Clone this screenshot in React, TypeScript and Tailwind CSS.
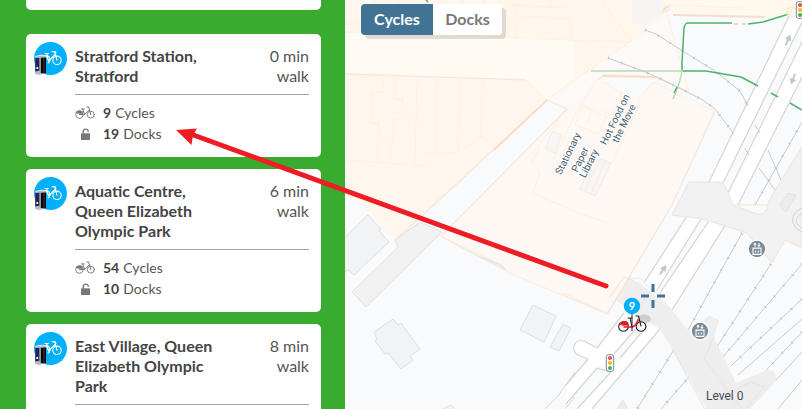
import React from "react";

type Station = { name: string; walk: string; availability?: { cycles: number; docks: number } };

const stations: Station[] = [
  { name: "Stratford Station, Stratford", walk: "0 min walk", availability: { cycles: 9, docks: 19 } },
  { name: "Aquatic Centre, Queen Elizabeth Olympic Park", walk: "6 min walk", availability: { cycles: 54, docks: 10 } },
  { name: "East Village, Queen Elizabeth Olympic Park", walk: "8 min walk" },
];

function DockBadge() {
  return (
    <svg className="size-[33px] shrink-0" viewBox="0 0 33 33" aria-hidden="true">
      <circle cx="16.5" cy="16.5" r="16.5" fill="#00b0fb" />
      <g fill="none" stroke="#fff" strokeWidth="1.1" strokeLinecap="round" strokeLinejoin="round">
        <circle cx="23" cy="18.3" r="4.2" />
        <path d="M12.5 13.6a4 4 0 0 1 1.5 7.4" />
        <path d="M2 14.5C6 13 10 13 12.5 14L14.5 19l6.5-6.500M12.5 11.500l2 7.500M11 11.500h3.5M19 9.6l1.800.2L23 18.300" />
        <path d="M18 9.600h3l1 1.600" />
      </g>
      <path d="M1.200 15.400 3.500 14l7.500-.6 1 1V31.500L5 33 1 32z" fill="#b9bcc4" />
      <path d="M1.200 16l4.300-.3v13l-4.300.8z" fill="#20265c" />
      <path d="M6.800 15.700l5.200-.3V31.500l-5.200-.5z" fill="#080808" />
      <path d="M10 16v15" stroke="#3b3b3b" />
      <path d="M6.100 15.700v15" stroke="#9296a2" />
      <rect x="2.400" y="25" width="1.800" height="2" fill="#fff" />
    </svg>
  );
}

function BikeIcon() {
  return (
    <svg className="h-[13px] w-5" viewBox="0 0 20 13" fill="none" stroke="#777" strokeLinecap="round" strokeLinejoin="round" aria-hidden="true">
      <circle cx="4.4" cy="8.6" r="3.7" strokeWidth=".9" />
      <circle cx="15.8" cy="8.6" r="3.500" strokeWidth=".9" />
      <path d="M1 6.400C2.300 4.500 5.200 4 7.500 5.600L7 8 4 7.600z" fill="#777" strokeWidth=".5" />
      <path d="M4.400 8.600h5.200L14 4.200M7.800 3.200l1.800 5.400M6.500 2.900h2.700M12 1h1.700l2.100 7.600" strokeWidth="1" />
    </svg>
  );
}

function UnlockIcon() {
  return (
    <svg className="h-3 w-5" viewBox="0 0 20 12" aria-hidden="true">
      <rect x="6" y="5.300" width="9" height="6.700" fill="#777" />
      <path d="M8.200 5.500V3.600a2.600 2.600 0 0 1 5.100-.6v.7" fill="none" stroke="#777" strokeWidth="1.400" />
    </svg>
  );
}

function StationCard({ station }: { station: Station }) {
  return (
    <li className="flex shrink-0 gap-2 rounded-[5px] bg-white pt-2 pr-3 pb-[13px] pl-2">
      <DockBadge />
      <div className="min-w-0 flex-1 pt-1">
        <div className="flex justify-between border-b border-[#a3a3a3] pb-2 text-base leading-5">
          <h2 className="w-2/3 font-bold">{station.name}</h2>
          <p className="w-12 text-right text-[#555]">{station.walk}</p>
        </div>
        {station.availability && (
          <dl className="pt-[7px] text-sm leading-[21px]">
            <div className="flex items-center gap-2">
              <BikeIcon />
              <dt className="order-2 -ml-1 text-[#555]">Cycles</dt>
              <dd className="font-bold">{station.availability.cycles}</dd>
            </div>
            <div className="flex items-center gap-2">
              <UnlockIcon />
              <dt className="order-2 -ml-1 text-[#555]">Docks</dt>
              <dd className="font-bold">{station.availability.docks}</dd>
            </div>
          </dl>
        )}
      </div>
    </li>
  );
}

function Lift({ x, y }: { x: number; y: number }) {
  return (
    <g transform={`translate(${x} ${y})`}>
      <circle r="8.800" fill="#7b8d9b" stroke="#fff" strokeWidth="1.300" />
      <path d="M-4-.9h8v6.300h-8zM-1.400 1.400v2.200M1.400 1.400v2.200M-2-2.400v-3.600M2-6v3.600" fill="none" stroke="#fff" strokeWidth="1.100" />
      <path d="M-3.700-4.300L-2-6.500-.3-4.300zM.3-4L2-1.900 3.700-4z" fill="#fff" />
    </g>
  );
}

function TrafficLight({ x, y }: { x: number; y: number }) {
  return (
    <g transform={`translate(${x} ${y})`}>
      <rect x="-3.700" y="-8.400" width="7.400" height="16.800" rx="2.400" fill="#fff" stroke="#7c8b97" />
      <circle cy="-5" r="2.100" fill="#e8534a" />
      <circle r="2.100" fill="#fbbc04" />
      <circle cy="5" r="2.100" fill="#4caf6a" />
    </g>
  );
}

function RoadArrow({ x, y, angle }: { x: number; y: number; angle: number }) {
  return (
    <path
      transform={`translate(${x} ${y}) rotate(${angle})`}
      d="M0-6L3.500 0H1V5.500H-1V0H-3.500z"
      fill="#c3c7cd"
    />
  );
}

function StreetMap() {
  return (
    <svg className="absolute inset-0 h-full w-full" viewBox="345 0 457 409" preserveAspectRatio="xMidYMid slice" role="img" aria-label="Map around Stratford Station">
      <rect x="0" y="0" width="1200" height="900" fill="#f8fafc" />

      {/* shopping centre */}
      <path d="M345 0H662L688 92 655 77 604 75 597 82 567 109 547 100 415 223 395 240 362 205 345 196z" fill="#fff7ee" />
      <path d="M345 33L507 38 573 40V80L547 100 525 80 345 74z" fill="#fffaf4" />
      <path d="M573 83L630 42 669 7 664 0 688 92 655 77 604 75 567 109 547 100z" fill="#fdf9f6" />
      <path d="M632 0H660L665 10 645 27 632 23z" fill="#f8f4f3" />
      <path d="M662 0H802V14L765 17 673 15z" fill="#fff8ec" />
      <path d="M567 109L597 82 609 81 610 88 638 100 653 82 715 111 672 205 607 314 563 295 507 271 440 236 472 205z" fill="#fef8f4" />
      <path d="M552 131l10 4-7 18-10-4z" fill="#f8f4f3" stroke="#f2eeeb" />
      <path d="M594 157l17 6-16 33-15-7z" fill="#faf5f3" stroke="#f1ebe9" />
      <path d="M599 160l-14 31M605 162l-14 32" stroke="#f2ecea" fill="none" />
      <g fill="none" stroke="#fdf1dd" strokeWidth="1">
        <path d="M345 32L420 34M345 24h20v8M353 24v8M375 0v32M398 0v5M442 0v5M463 0v5M484 0l2 6M506 0l2 37M516 0v37M516 6l34 1V0M516 16l55 3v20M506 37l66 3M507 4l43 3M550 7l22 1" />
        <path d="M348 78l-1 83M383 78l-1 14-10 1-1 30 8 1-1 38M395 78v21l8 1-1 18-9 1-2 43M417 78l-2 87M437 79l-1 72M460 80l-2 72M483 81l-2 55M345 161l35 1 46 4 1-14 31 1 23-17 14 12" />
        <path d="M526 80l21 20M547 100l26-19 58-40-30-41M573 40l58 2L670 7M663 0l26 92M670 5l72 3" />
        <path d="M567 109l-37 48 10 16-7 20 45 20 30 10M575 115l-22 46M540 148l-10 16M596 80l-21 35" />
        <path d="M582 105l24 11-7 18-24-9 7-19 10 4-5 14M602 81l20 12-9 20M638 100l15-18 62 29M630 99l-18 16-10-4M612 163l26-57M569 140l-12 26" />
      </g>
      <g fill="none" stroke="#f9e6d7" strokeWidth="1.300">
        <path d="M345 74l181 6M547 100L435 204l-40 36M567 109L472 205l-31 31M547 100l20 9M597 80l7-5 51 2 34 15" />
        <path d="M715 111L672 205 607 314 563 295M440 236l67 35M663 10l7-5-1 5-6 2z" />
      </g>
      <path d="M547 100l-53 50M603 76l53 1M673 15l92 2M668 6l-5 4" fill="none" stroke="#f6ddca" strokeWidth="1.800" />
      <path d="M440 236l62 29 5 7 55 23 2-2 43 20" fill="none" stroke="#fcecd9" />
      <path d="M480 257l21 8 4 5" fill="none" stroke="#e7e7e7" strokeWidth="2" />

      {/* small buildings */}
      <g fill="#f2f3f4" stroke="#dcdee1" strokeLinejoin="round">
        <path d="M340 242L368 215l13 14-2 2 10 11-35 33-5-5-4 2z" />
        <path d="M374 332l19-13 5 6 3-2 19 26-10 7 3 4-12 9-13-16-3 1-10-13 2-2z" />
        <path d="M533 305l23 11-12 26-24-12zM563 324l8 4-12 23-9-4zM443 409l8-4 4 4" />
      </g>
      <path d="M420 222l22 10-76 75-14-15 46-45-3-7z" fill="#f1f1f1" stroke="#e2e2e2" />

      {/* carriageways */}
      <path d="M792 10L709 182 644 283 657 290 722 185 802 22V0z" fill="#fff" />
      <path d="M802 42L728 193 660 293 672 310 738 205 802 77z" fill="#fff" />
      <path d="M624 313L597 348 584 341C574 338 570 351 578 355L588 359 566 385V404L597 368 617 352 640 324z" fill="#fff" />
      <path d="M647 326L622 358 611 372 577 409H592L660 329z" fill="#fff" />
      <g fill="none" stroke="#d5d7db" strokeWidth="1.300" strokeLinejoin="round">
        <path d="M792 10L709 182 644 283M802 22L722 185 657 290M802 42L728 193 660 293M802 77L738 205 672 310" />
        <path d="M624 313L597 348 584 341C574 338 570 351 578 355L588 359 566 385M640 324L614 354M620 358L647 326M611 372L597 368 566 404M611 372L577 409M660 329L592 409" />
      </g>
      <path d="M545 409l13-13 17-24M565 409l10-12" fill="none" stroke="#d5d7db" />

      {/* railway tracks */}
      <g fill="none" stroke="#c8cacd" strokeWidth="1">
        <path d="M742 233L688 330M771 264L705 365M802 264L705 378M802 299L731 366M802 319L738 375M802 332L755 382M802 352L764 393M802 380L778 409M675 348L637 409M695 370L661 409M755 205L802 122M776 205L802 165M768 150L781 180M759 168L775 190M745 148l4 7M755 125l5 8" />
        <path d="M645 30l11 4 22 14 37 23 25 20 8 15M608 58l40 15 15 7 40 20 12 9 19 25" />
      </g>
      <g fill="none" stroke="#bfc2c6" strokeWidth="3" strokeDasharray="1 13">
        <path d="M742 233L688 330M771 264L705 365M802 264L705 378M802 299L731 366M802 332L755 382M675 348L637 409M695 370L661 409M755 205L802 122M645 30l11 4 22 14 37 23 25 20 8 15M608 58l40 15 15 7 40 20 12 9 19 25" />
      </g>

      {/* raised walkways */}
      <path d="M689 182H720Q724 183 726 188L733 205 757 214 767 205 778 185 802 147V248L785 240 772 263 747 233 725 226 703 219 672 215 677 205z" fill="#f1f1f1" stroke="#e8e5e2" />
      <path d="M733 205l24 9 5 0 6-6-3-3z" fill="#f8fafc" stroke="#f6e5d2" />
      <path d="M780 205l8-12 8 2-10 17z" fill="#ececec" stroke="#e2e2e2" />
      <path d="M802 208c-11 5-12 14-5 21l5 3M802 213c-7 4-8 11 0 15" fill="none" stroke="#d0d2d5" />
      <path d="M630 279L640 283 671 309 688 330 700 324 709 315 719 320 714 337 736 383 750 377 767 370Q778 370 776 381L750 409H707L672 349 660 329 616 301z" fill="#eee" />
      <path d="M714 337l-10 22 38 50h-37L672 349M736 390l15-8 13 5-18 22" fill="none" stroke="#e4e4e4" />
      <path d="M747 233l25 30 13-23 17 7M711 365l25 44M630 279l10-1 32 32" fill="none" stroke="#f8e8d8" />
      <path d="M617 409l6-9 5 9" fill="#eee" stroke="#e3e3e3" />
      <path d="M607 314L631 276M610 297l14-20 10 4" fill="none" stroke="#f6e3d2" strokeWidth="1.300" />

      {/* cycle routes */}
      <g fill="none" stroke="#4db368" strokeWidth="1.500" strokeLinejoin="round">
        <path d="M682 71V63L684 28Q685 23 688 23H732M748 24L763 22 789 14" />
        <path d="M683 71L706 71 741 77 758 86M771 93l7 4M790 103l12 7" />
        <path d="M591 71H683M682 71Q680 84 673 99" stroke="#b6d9ba" />
        <path d="M677 87l-3 6M426 0l2 2" />
      </g>
      <path d="M734 24h4M742 24h4" stroke="#d1d5d8" strokeWidth="1.500" />

      <RoadArrow x={788} y={40} angle={24} />
      <RoadArrow x={793} y={79} angle={202} />
      <RoadArrow x={663} y={270} angle={34} />
      <rect x="787" y="8" width="10" height="9" fill="#fff7e0" stroke="#eee3c4" opacity=".7" />

      <g fontFamily="Roboto, sans-serif" fontSize="10" fill="#465d6c" stroke="#fff" strokeWidth="2" paintOrder="stroke" textAnchor="middle">
        <text transform="translate(571 155) rotate(-64)">Stationary</text>
        <text transform="translate(583 161) rotate(-64)">Paper</text>
        <text transform="translate(592 165) rotate(-64)">Library</text>
        <text transform="translate(618 121) rotate(-64)">Hot Food on</text>
        <text transform="translate(627 125) rotate(-64)">the Move</text>
      </g>
      <text x="706" y="400" fontFamily="Roboto, sans-serif" fontSize="12" fill="#3f4a52">Level 0</text>

      <Lift x={757} y={249} />
      <Lift x={700} y={331} />
      <TrafficLight x={610} y={363} />
      <TrafficLight x={800} y={10} />

      {/* map centre */}
      <path d="M653 284v8M653 300v8M641 296h8M657 296h8" stroke="#417394" strokeWidth="3" />

      {/* cycle hire pin */}
      <ellipse cx="644" cy="319" rx="7" ry="4.500" fill="#cfcfcf" />
      <path d="M632 313v18" stroke="#777" strokeWidth="1.600" />
      <g fill="none" stroke="#222" strokeWidth="1.100" strokeLinecap="round">
        <circle cx="623.500" cy="326.500" r="4.800" fill="#fff" fillOpacity=".5" />
        <circle cx="641" cy="326.500" r="4.800" fill="#fff" fillOpacity=".5" />
        <path d="M619.500 324q3-4 8-2l1 3-5 .3z" fill="#e11c24" stroke="#e11c24" strokeWidth=".8" />
        <path d="M624 327h8q4-1 6-7" stroke="#e11c24" strokeWidth="1.600" />
        <path d="M628 318h4M630 318l2 9M636 316h2.500l2.500 10" />
      </g>
      <circle cx="632" cy="306" r="8.200" fill="#00b0fb" />
      <text x="632" y="310" textAnchor="middle" fontFamily="Lato, sans-serif" fontSize="11" fontWeight="700" fill="#fff">9</text>
    </svg>
  );
}

export default function App() {
  return (
    <main className="relative flex h-screen overflow-hidden font-['Lato',sans-serif] text-[#444]">
      <aside className="w-[345px] shrink-0 overflow-hidden bg-[#39ab2f] pr-6 pl-[26px]">
        <div className="h-2.5 rounded-b-[5px] bg-white" />
        <ul className="mt-6 flex flex-col gap-3">
          {stations.map((station) => (
            <StationCard key={station.name} station={station} />
          ))}
        </ul>
      </aside>
      <section className="relative min-w-0 flex-1 overflow-hidden">
        <StreetMap />
        <div className="absolute top-1 left-4 flex h-[31px] rounded-[4px] text-base font-bold shadow-[4px_4px_0_rgba(120,110,100,0.22)]">
          <button type="button" aria-pressed="true" className="w-[72px] rounded-l-[4px] bg-[#417394] pb-0.5 text-white">Cycles</button>
          <button type="button" aria-pressed="false" className="w-[69px] rounded-r-[4px] bg-white pb-0.5 text-[#777]">Docks</button>
        </div>
      </section>
      <svg className="pointer-events-none absolute top-0 left-0" width="802" height="409" aria-hidden="true">
        <path d="M192 134.500L606 286" stroke="#ee1c25" strokeWidth="5" strokeLinecap="round" />
        <path d="M176 130L197 128.500 193 135 191.500 145z" fill="#ee1c25" />
      </svg>
    </main>
  );
}
